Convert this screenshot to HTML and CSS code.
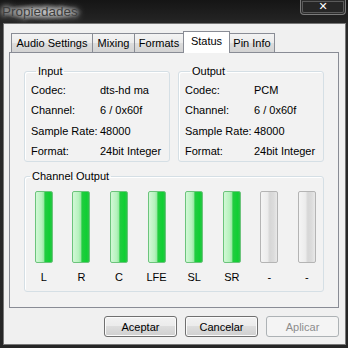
FILE: index.html
```html
<!DOCTYPE html>
<html lang="es">
<head>
<meta charset="UTF-8" />
<title>Propiedades</title>
<link rel="stylesheet" href="styles.css">
</head>
<body>

<div class="window">
  <div class="titlebar">
    <span class="title">Propiedades</span>
    <span class="close">&#x2715;</span>
  </div>

  <div class="client">
    <div class="tabs">
      <span class="tab">Audio Settings</span>
      <span class="tab">Mixing</span>
      <span class="tab">Formats</span>
      <span class="tab active">Status</span>
      <span class="tab">Pin Info</span>
    </div>

    <div class="panel">
      <div class="columns">
        <fieldset class="group">
          <legend>Input</legend>
          <div class="row"><span class="key">Codec:</span><span>dts-hd ma</span></div>
          <div class="row"><span class="key">Channel:</span><span>6 / 0x60f</span></div>
          <div class="row"><span class="key">Sample Rate:</span><span>48000</span></div>
          <div class="row"><span class="key">Format:</span><span>24bit Integer</span></div>
        </fieldset>
        <fieldset class="group">
          <legend>Output</legend>
          <div class="row"><span class="key">Codec:</span><span>PCM</span></div>
          <div class="row"><span class="key">Channel:</span><span>6 / 0x60f</span></div>
          <div class="row"><span class="key">Sample Rate:</span><span>48000</span></div>
          <div class="row"><span class="key">Format:</span><span>24bit Integer</span></div>
        </fieldset>
      </div>

      <fieldset class="group channels">
        <legend>Channel Output</legend>
        <div class="meters">
          <div class="meter"><div class="bar on"></div><span>L</span></div>
          <div class="meter"><div class="bar on"></div><span>R</span></div>
          <div class="meter"><div class="bar on"></div><span>C</span></div>
          <div class="meter"><div class="bar on"></div><span>LFE</span></div>
          <div class="meter"><div class="bar on"></div><span>SL</span></div>
          <div class="meter"><div class="bar on"></div><span>SR</span></div>
          <div class="meter"><div class="bar"></div><span>-</span></div>
          <div class="meter"><div class="bar"></div><span>-</span></div>
        </div>
      </fieldset>
    </div>

    <div class="buttons">
      <button>Aceptar</button>
      <button>Cancelar</button>
      <button disabled>Aplicar</button>
    </div>
  </div>
</div>

</body>
</html>
```

FILE: styles.css
```css
html, body {
  margin: 0;
  padding: 0;
  background: #1e1e1e;
}
body {
  font-family: "Liberation Sans", Arial, sans-serif;
  font-size: 11px;
  color: #000;
}
.window {
  width: 348px;
  height: 348px;
  box-sizing: border-box;
  background: linear-gradient(#151515, #2a2a2a 30px, #262626);
  display: flex;
  flex-direction: column;
}
.titlebar {
  height: 23px;
  display: flex;
  justify-content: space-between;
  align-items: flex-start;
}
.title {
  margin: 3px 0 0 0;
  padding: 0 6px 1px 2px;
  font-size: 13.5px;
  line-height: 17px;
  color: #3e3e3e;
  text-shadow: 0 0 5px #fff, 0 0 9px #e0e0e0;
  background: radial-gradient(ellipse at center, rgba(230,230,230,0.6), rgba(230,230,230,0) 70%);
}
.close {
  width: 44px;
  height: 14px;
  margin-right: 2px;
  border: 1px solid #7a7a7a;
  border-top: none;
  border-radius: 0 0 4px 4px;
  box-shadow: inset 0 0 0 1px #2c2c2c, inset 0 0 0 2px #5a5a5a;
  background: #262626;
  color: #fff;
  font-family: "DejaVu Sans", sans-serif;
  font-size: 11px;
  font-weight: bold;
  line-height: 13px;
  text-align: center;
}
.client {
  flex: 1;
  margin: 0 2px 3px 3px;
  border: 1px solid #777;
  background: #f0f0f0;
  padding: 7px 6px 0 5px;
  display: flex;
  flex-direction: column;
}
.tabs {
  display: flex;
  align-items: flex-end;
  height: 21px;
  padding-left: 2px;
  position: relative;
  z-index: 1;
}
.tab {
  height: 19px;
  line-height: 18px;
  border: 1px solid #898c95;
  border-bottom: none;
  border-right: none;
  background: linear-gradient(#f3f3f3, #ebebeb 50%, #dddddd 50%, #d3d3d3);
  box-sizing: border-box;
  white-space: nowrap;
  text-align: center;
}
.tab:nth-child(1) { width: 81px; }
.tab:nth-child(2) { width: 42px; }
.tab:nth-child(3) { width: 49px; }
.tab:nth-child(5) { width: 46px; border-right: 1px solid #898c95; }
.tab.active {
  width: 47px;
  height: 22px;
  margin-bottom: -1px;
  line-height: 19px;
  border-right: 1px solid #898c95;
  background: #fff;
  margin-right: -1px;
}
.panel {
  height: 256px;
  box-sizing: border-box;
  border: 1px solid #898c95;
  background: #f2f2f2;
  padding: 11px 0 0 14px;
}
.columns {
  display: flex;
  gap: 8px;
}
.group {
  margin: 0;
  padding: 2px 0 0 6px;
  border: 1px solid #d5dfe5;
  border-radius: 3px;
  box-shadow: inset 1px 1px 0 #fff;
  min-width: 0;
  box-sizing: border-box;
}
.group legend {
  padding: 0 2px;
  margin-left: 5px;
  line-height: 14px;
}
.columns .group {
  width: 146px;
  height: 98px;
}
.row {
  display: flex;
  height: 20.3px;
  line-height: 20px;
  white-space: nowrap;
}
.key {
  width: 69px;
}
.channels {
  width: 300px;
  height: 123px;
  margin-top: 7px;
  padding: 8px 0 0 0;
}
.meters {
  display: grid;
  grid-template-columns: repeat(8, 37.6px);
}
.meter {
  display: flex;
  flex-direction: column;
  align-items: center;
}
.meter span {
  margin-top: 6px;
  line-height: 16px;
}
.bar {
  width: 18px;
  height: 72px;
  box-sizing: border-box;
  border: 1px solid #b4b4b4;
  border-radius: 2px;
  background: linear-gradient(to right, #f4f4f4 0%, #ececec 40%, #d6d6d6 55%, #dcdcdc 80%, #e8e8e8 100%);
}
.bar.on {
  border-color: #6cc47c;
  background: linear-gradient(to right, #d2f8d6 0%, #b6f2be 35%, #94e9a0 50%, #22cc40 55%, #10cf33 85%, #2cc448 100%);
}
.buttons {
  display: flex;
  justify-content: flex-end;
  gap: 8px;
  margin-top: 8px;
}
button {
  width: 73px;
  height: 21px;
  padding: 0;
  font-family: inherit;
  font-size: 11px;
  color: #000;
  border: 1px solid #707070;
  border-radius: 3px;
  background: linear-gradient(#f2f2f2, #ebebeb 50%, #dddddd 50%, #cfcfcf);
  box-shadow: inset 0 0 0 1px #fbfbfb;
}
button:disabled {
  color: #8d8d8d;
  border-color: #adb2b5;
  background: #f4f4f4;
  box-shadow: none;
}
```
